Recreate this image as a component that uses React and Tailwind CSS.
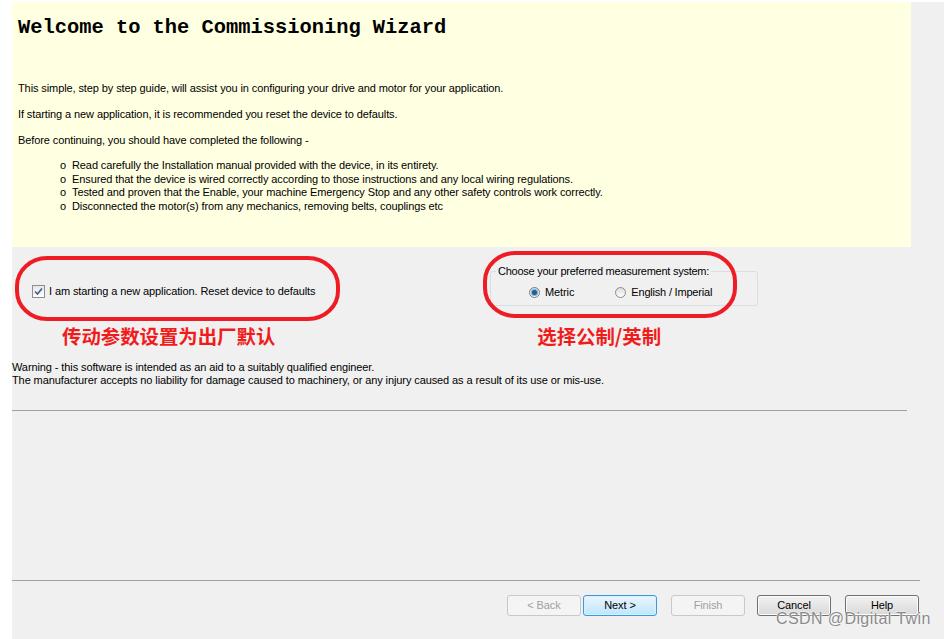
import React from 'react';

function Btn({ children, disabled, primary }) {
    const base = 'w-[74px] h-[21px] rounded-[3px] border text-[11px] flex items-center justify-center';
    if (disabled) {
        return <div className={`${base} border-[#c8c8c8] bg-[#f4f4f4] text-[#a0a0a0]`}>{children}</div>;
    }
    if (primary) {
        return <div className={`${base} border-[#3c9ad8] bg-gradient-to-b from-[#eaf6fd] to-[#bee6fd] text-black shadow-[inset_0_0_0_1px_#d8f0fc]`}>{children}</div>;
    }
    return <div className={`${base} border-[#707070] bg-gradient-to-b from-[#f2f2f2] to-[#d9d9d9] text-black shadow-[inset_0_0_0_1px_#fbfbfb]`}>{children}</div>;
}

export default function App() {
    const bullets = [
        'Read carefully the Installation manual provided with the device, in its entirety.',
        'Ensured that the device is wired correctly according to those instructions and any local wiring regulations.',
        'Tested and proven that the Enable, your machine Emergency Stop and any other safety controls work correctly.',
        'Disconnected the motor(s) from any mechanics, removing belts, couplings etc',
    ];

    return (
        <div className="relative w-[944px] h-[639px] bg-white overflow-hidden font-['Liberation_Sans',Arial,sans-serif] text-[11px] text-black tracking-[-0.1px]">
            <div className="ml-[12px] mt-[2px] h-[637px] bg-[#f0f0f0] flex flex-col">
                {/* yellow info panel */}
                <div className="w-[899px] h-[245px] bg-[#ffffe1] pl-[6px] pt-[13px]">
                    <h1 className="font-['Liberation_Mono',monospace] font-bold text-[20.4px] leading-[26px] tracking-normal">
                        Welcome to the Commissioning Wizard
                    </h1>
                    <p className="mt-[40px] leading-[14px]">This simple, step by step guide, will assist you in configuring your drive and motor for your application.</p>
                    <p className="mt-[12px] leading-[14px]">If starting a new application, it is recommended you reset the device to defaults.</p>
                    <p className="mt-[12px] leading-[14px]">Before continuing, you should have completed the following -</p>
                    <ul className="mt-[12px] ml-[42px]">
                        {bullets.map((b) => (
                            <li key={b} className="flex leading-[13.5px]">
                                <span className="w-[12px]">o</span>
                                <span>{b}</span>
                            </li>
                        ))}
                    </ul>
                </div>

                {/* options row */}
                <div className="flex h-[70px]">
                    <div className="w-[478px] pl-[20px] pt-[38px] flex items-start">
                        <div className="w-[13px] h-[13px] border border-[#8e8f8f] bg-gradient-to-b from-[#e6e6e6] to-[#ffffff] flex items-center justify-center">
                            <svg width="9" height="9" viewBox="0 0 9 9">
                                <path d="M1 4.5 L3.5 7 L8 1.5" fill="none" stroke="#4a5f97" strokeWidth="1.7" />
                            </svg>
                        </div>
                        <span className="ml-[4px] leading-[13px]">I am starting a new application. Reset device to defaults</span>
                    </div>
                    <div className="relative mt-[24px] w-[268px] h-[35px] border border-[#d5dfe5] rounded-[3px]">
                        <span className="absolute left-[5px] -top-[8px] px-[2px] bg-[#f0f0f0] leading-[14px] tracking-[-0.25px]">Choose your preferred measurement system:</span>
                        <div className="flex items-center pl-[38px] pt-[12px]">
                            <span className="w-[11px] h-[11px] rounded-full border border-[#7a7a7a] bg-gradient-to-b from-[#e0e0e0] to-white flex items-center justify-center">
                                <span className="w-[5px] h-[5px] rounded-full bg-[#1f5f94] shadow-[0_0_1px_1px_#6aa8d6]"></span>
                            </span>
                            <span className="ml-[5px]">Metric</span>
                            <span className="ml-[41px] w-[11px] h-[11px] rounded-full border border-[#8a8a8a] bg-gradient-to-b from-[#dcdcdc] to-white"></span>
                            <span className="ml-[5px] tracking-[-0.2px]">English / Imperial</span>
                        </div>
                    </div>
                </div>

                {/* red annotations */}
                <div className="flex h-[43px] pt-[8px] font-['Noto_Sans_CJK_SC',sans-serif] font-bold text-[19.4px] leading-[22px] text-[#f01c1c] tracking-normal">
                    <span className="ml-[50px]">传动参数设置为出厂默认</span>
                    <span className="ml-[262px]">选择公制/英制</span>
                </div>

                {/* warning */}
                <div className="pt-[1px] leading-[13px]">
                    <p>Warning - this software is intended as an aid to a suitably qualified engineer.</p>
                    <p>The manufacturer accepts no liability for damage caused to machinery, or any injury caused as a result of its use or mis-use.</p>
                </div>

                <div className="mt-[23px] w-[895px] h-px bg-[#a0a0a0]"></div>
                <div className="h-[169px] shrink-0"></div>
                <div className="w-[908px] h-px bg-[#a0a0a0]"></div>

                {/* buttons */}
                <div className="flex pt-[14px] pl-[495px]">
                    <Btn disabled>&lt; Back</Btn>
                    <div className="ml-[2px]"><Btn primary>Next &gt;</Btn></div>
                    <div className="ml-[14px]"><Btn disabled>Finish</Btn></div>
                    <div className="ml-[12px]"><Btn>Cancel</Btn></div>
                    <div className="ml-[14px]"><Btn>Help</Btn></div>
                </div>
            </div>

            {/* hand-drawn red ellipses over the screenshot */}
            <svg className="absolute left-0 top-0 pointer-events-none" width="944" height="639">
                <rect x="17" y="258" width="321" height="61" rx="30" ry="28" fill="none" stroke="#ee1c24" strokeWidth="4" />
                <rect x="485" y="253" width="250" height="63" rx="30" ry="28" fill="none" stroke="#ee1c24" strokeWidth="4" />
            </svg>

            {/* watermark */}
            <div className="absolute left-[776px] top-[609px] font-['Liberation_Sans',Arial,sans-serif] text-[16px] leading-[20px] tracking-[0.4px] text-[#8a8a8a] [text-shadow:0_0_2px_#fff,0_0_1px_#fff]">
                CSDN @Digital Twin
            </div>
        </div>
    );
}
